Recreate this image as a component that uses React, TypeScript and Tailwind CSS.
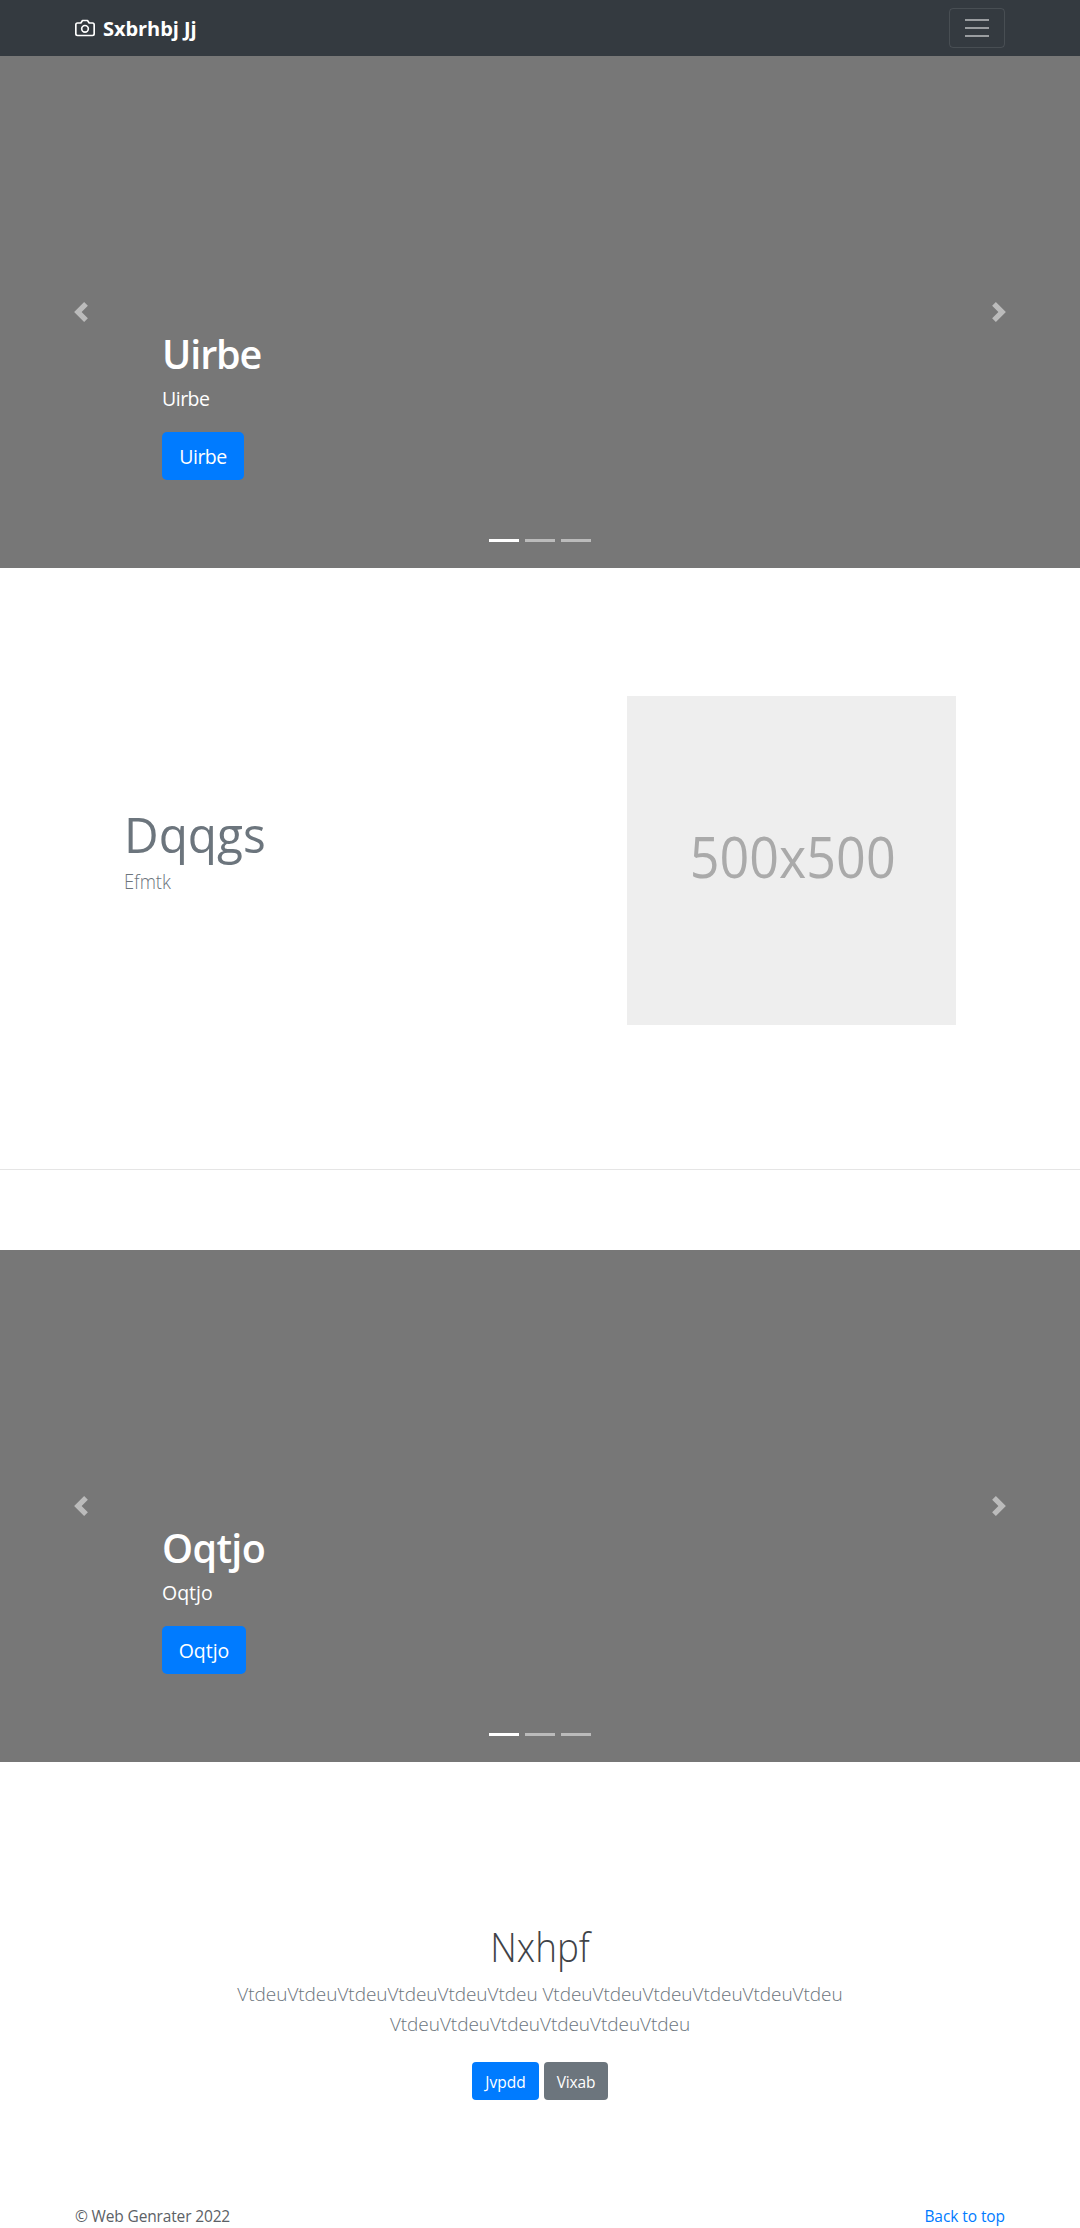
type CarouselProps = { title: string; headingClass: string; textClass: string; buttonClass: string };

function Carousel({ title, headingClass, textClass, buttonClass }: CarouselProps) {
  return (
    <section className="relative h-[512px] bg-[#777777] text-white">
      <div className="flex h-full flex-col items-start justify-end px-[162px] pb-[88px]">
        <h2 className={`mb-[6px] text-[39.5px] leading-[48px] font-semibold ${headingClass}`}>{title}</h2>
        <p className={`mb-[18px] text-[19.5px] leading-[30px] ${textClass}`}>{title}</p>
        <button className={`h-12 rounded-[5px] bg-[#007bff] pt-px text-[19.5px] leading-[30px] ${textClass} ${buttonClass}`}>{title}</button>
      </div>
      <button className="absolute inset-y-0 left-0 flex w-[162px] items-center justify-center opacity-50" aria-label="Previous">
        <svg className="size-5" viewBox="0 0 8 8" fill="#fff">
          <path d="M5.25 0l-4 4 4 4 1.5-1.5L4.25 4l2.5-2.5L5.25 0z" />
        </svg>
      </button>
      <button className="absolute inset-y-0 right-0 flex w-[162px] items-center justify-center opacity-50" aria-label="Next">
        <svg className="size-5" viewBox="0 0 8 8" fill="#fff">
          <path d="M2.75 0l-1.5 1.5L3.75 4l-2.5 2.5L2.75 8l4-4-4-4z" />
        </svg>
      </button>
      <div className="absolute inset-x-0 bottom-[26px] flex justify-center gap-1.5">
        <span className="h-[3px] w-[30px] bg-white" />
        <span className="h-[3px] w-[30px] bg-white/50" />
        <span className="h-[3px] w-[30px] bg-white/50" />
      </div>
    </section>
  );
}

export default function App() {
  return (
    <div className="min-h-[2228px] bg-white font-['Open_Sans',sans-serif] text-[#212529]">
      <header className="flex h-14 items-center justify-between bg-[#343a40] px-[75px]">
        <a className="flex items-center gap-2 text-xl leading-[30px] font-bold tracking-[-0.05px] text-white">
          <svg className="size-5" viewBox="0 0 24 24" fill="none" stroke="currentColor" strokeWidth="2" strokeLinecap="round" strokeLinejoin="round">
            <path d="M23 19a2 2 0 0 1-2 2H3a2 2 0 0 1-2-2V8a2 2 0 0 1 2-2h4l2-3h6l2 3h4a2 2 0 0 1 2 2z" />
            <circle cx="12" cy="13" r="4" />
          </svg>
          <span className="pt-0.5">Sxbrhbj Jj</span>
        </a>
        <button className="flex h-10 w-14 flex-col items-center justify-center gap-1.5 rounded border border-white/10" aria-label="Menu">
          <span className="h-0.5 w-6 bg-white/50" />
          <span className="h-0.5 w-6 bg-white/50" />
          <span className="h-0.5 w-6 bg-white/50" />
        </button>
      </header>

      <Carousel title="Uirbe" headingClass="tracking-[-1.1px]" textClass="tracking-[-0.5px]" buttonClass="w-[82px]" />

      <section className="flex items-start justify-between px-[124px] pt-32">
        <div className="pt-[108px] text-[#6c757d]">
          <h2 className="mb-[3px] origin-left scale-x-[0.955] text-[50px] leading-[60px]">Dqqgs</h2>
          <p className="origin-left scale-x-[0.94] text-[19.5px] leading-[30px] font-light">Efmtk</p>
        </div>
        <div className="flex size-[329px] items-center justify-center bg-[#eeeeee] pb-[9px] pl-0.5 text-[56px] text-[#aaaaaa]">
          <span className="scale-x-[0.93]">500x500</span>
        </div>
      </section>

      <hr className="mt-36 mb-20 border-[#e5e5e5]" />

      <Carousel title="Oqtjo" headingClass="tracking-[-0.65px]" textClass="tracking-[0px]" buttonClass="w-[84px]" />

      <section className="flex flex-col items-center pt-[161px] text-center">
        <h2 className="mb-2 scale-x-[0.92] text-[40px] leading-[48px] font-light text-[#3f4347]">Nxhpf</h2>
        <p className="w-[620px] text-[19px] leading-[30px] font-light tracking-[-0.05px] text-[#6c757d]">
          VtdeuVtdeuVtdeuVtdeuVtdeuVtdeu VtdeuVtdeuVtdeuVtdeuVtdeuVtdeu VtdeuVtdeuVtdeuVtdeuVtdeuVtdeu
        </p>
        <div className="mt-[23px] flex gap-[5px] text-[15.5px] leading-6 text-white">
          <button className="h-[38px] w-[67px] rounded bg-[#007bff] pt-px">Jvpdd</button>
          <button className="h-[38px] w-16 rounded bg-[#6c757d] pt-px tracking-[-0.15px]">Vixab</button>
        </div>
      </section>

      <footer className="mt-[104px] flex justify-between px-[75px] text-[15.5px] leading-6">
        <p className="tracking-[-0.15px] text-[#5c6166]">© Web Genrater 2022</p>
        <a className="tracking-[-0.08px] text-[#007bff]">Back to top</a>
      </footer>
    </div>
  );
}
